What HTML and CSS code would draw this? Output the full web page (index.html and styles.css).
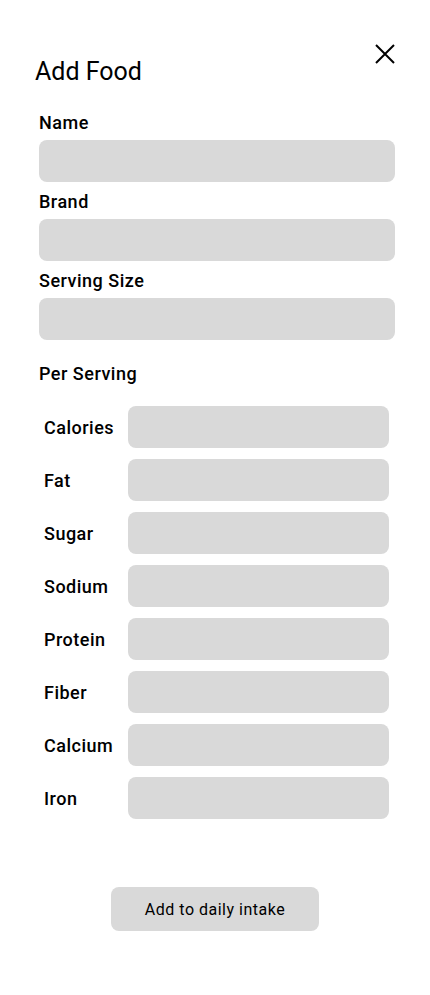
FILE: index.html
```html
<!DOCTYPE html>
<html lang="en">
<head>
<meta charset="utf-8">
<title>Add Food</title>
<link rel="stylesheet" href="styles.css">
</head>
<body>
<main class="sheet">
  <header class="sheet-header">
    <h1 class="title">Add Food</h1>
    <button class="close" aria-label="Close">
      <svg width="20" height="20" viewBox="0 0 20 20" aria-hidden="true">
        <path d="M1 1 L19 19 M19 1 L1 19" stroke="#000" stroke-width="2" fill="none"/>
      </svg>
    </button>
  </header>

  <div class="fields">
    <div class="field">
      <label class="label">Name</label>
      <div class="input"></div>
    </div>
    <div class="field">
      <label class="label">Brand</label>
      <div class="input"></div>
    </div>
    <div class="field">
      <label class="label">Serving Size</label>
      <div class="input"></div>
    </div>
  </div>

  <h2 class="section">Per Serving</h2>

  <div class="nutrients">
    <div class="row"><span class="row-label">Calories</span><div class="input"></div></div>
    <div class="row"><span class="row-label">Fat</span><div class="input"></div></div>
    <div class="row"><span class="row-label">Sugar</span><div class="input"></div></div>
    <div class="row"><span class="row-label">Sodium</span><div class="input"></div></div>
    <div class="row"><span class="row-label">Protein</span><div class="input"></div></div>
    <div class="row"><span class="row-label">Fiber</span><div class="input"></div></div>
    <div class="row"><span class="row-label">Calcium</span><div class="input"></div></div>
    <div class="row"><span class="row-label">Iron</span><div class="input"></div></div>
  </div>

  <div class="actions">
    <button class="primary">Add to daily intake</button>
  </div>
</main>
</body>
</html>
```
FILE: styles.css
```css
* { box-sizing: border-box; }
html, body { margin: 0; padding: 0; background: #fff; }
body {
  font-family: Roboto, "Noto Sans", "Liberation Sans", sans-serif;
  color: #000;
}
.sheet {
  width: 430px;
  padding: 44px 35px 0 35px;
}
.sheet-header {
  display: flex;
  justify-content: space-between;
  align-items: flex-start;
}
.title {
  margin: 13px 0 0 0;
  font-size: 25px;
  font-weight: 400;
  line-height: 29px;
}
.close {
  border: 0;
  background: none;
  padding: 0;
  margin: 0;
  width: 20px;
  height: 20px;
  display: block;
}
.close svg { display: block; }

.fields {
  margin-top: 26px;
  padding-left: 4px;
  display: flex;
  flex-direction: column;
  gap: 9px;
}
.field {
  display: flex;
  flex-direction: column;
  gap: 7px;
}
.label,
.section,
.row-label {
  font-family: Roboto, "Noto Sans", sans-serif;
  font-size: 18px;
  font-weight: 500;
  line-height: 21px;
  letter-spacing: 0.5px;
}
.input {
  height: 42px;
  background: #d9d9d9;
  border-radius: 8px;
}
.section {
  margin: 23px 0 0 4px;
}
.nutrients {
  margin-top: 22px;
  padding: 0 6px 0 9px;
  display: flex;
  flex-direction: column;
  gap: 11px;
}
.row {
  display: grid;
  grid-template-columns: 84px 1fr;
  align-items: center;
}
.row-label {
  padding-top: 1px;
}
.actions {
  display: flex;
  justify-content: center;
  margin-top: 68px;
}
.primary {
  width: 208px;
  height: 44px;
  border: 0;
  border-radius: 8px;
  background: #d9d9d9;
  font-family: Roboto, "Noto Sans", "Liberation Sans", sans-serif;
  font-size: 16px;
  font-weight: 400;
  color: #000;
  letter-spacing: 0.5px;
}
```
